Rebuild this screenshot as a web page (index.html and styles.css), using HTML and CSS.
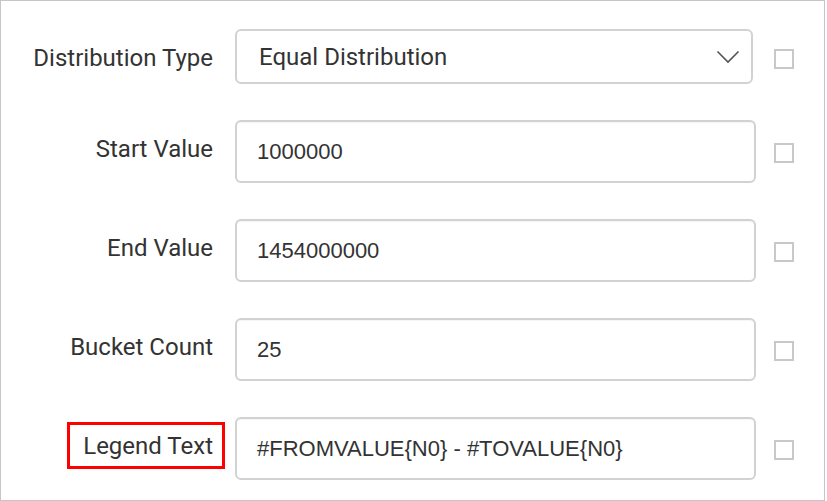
FILE: index.html
```html
<!DOCTYPE html>
<html>
<head>
<meta charset="utf-8">
<link rel="stylesheet" href="styles.css">
</head>
<body>
<div class="panel">
  <div class="row">
    <div class="label-col"><span class="label">Distribution Type</span></div>
    <div class="field">
      <div class="select">
        <span>Equal Distribution</span>
        <svg class="chev" width="24" height="14" viewBox="0 0 24 14"><path d="M1.5 1.5 L12 12 L22.5 1.5" fill="none" stroke="#555" stroke-width="1.6"/></svg>
      </div>
    </div>
    <div class="check check-select"></div>
  </div>
  <div class="row">
    <div class="label-col"><span class="label">Start Value</span></div>
    <div class="field"><div class="input">1000000</div></div>
    <div class="check"></div>
  </div>
  <div class="row">
    <div class="label-col"><span class="label">End Value</span></div>
    <div class="field"><div class="input">1454000000</div></div>
    <div class="check"></div>
  </div>
  <div class="row">
    <div class="label-col"><span class="label">Bucket Count</span></div>
    <div class="field"><div class="input">25</div></div>
    <div class="check"></div>
  </div>
  <div class="row">
    <div class="label-col"><span class="label label-hl">Legend Text</span></div>
    <div class="field"><div class="input">#FROMVALUE{N0} - #TOVALUE{N0}</div></div>
    <div class="check"></div>
  </div>
</div>
</body>
</html>
```
FILE: styles.css
```css
html, body {
  margin: 0;
  padding: 0;
  background: #fff;
}
.panel {
  box-sizing: border-box;
  width: 825px;
  height: 501px;
  border: 1px solid #c6c6c6;
  padding-top: 28px;
  display: flex;
  flex-direction: column;
  gap: 36px;
}
.row {
  display: flex;
  align-items: flex-start;
}
.label-col {
  width: 224px;
  display: flex;
  justify-content: flex-end;
  flex: none;
}
.label {
  margin-top: 5px;
  font-family: Roboto, "Liberation Sans", sans-serif;
  font-size: 24px;
  line-height: 39px;
  padding: 2px 9px 0 13px;
  color: #333;
  border: 3px solid transparent;
  white-space: nowrap;
}
.label-hl {
  border-color: #f00;
}
.field {
  margin-left: 10px;
  width: 521px;
  flex: none;
}
.select {
  box-sizing: border-box;
  width: 518px;
  height: 55px;
  border: 2px solid #d2d2d2;
  border-radius: 6px;
  display: flex;
  align-items: center;
  justify-content: space-between;
  padding: 1px 11px 0 22px;
  font-family: Roboto, "Liberation Sans", sans-serif;
  font-size: 24px;
  color: #333;
}
.chev {
  display: block;
}
.input {
  box-sizing: border-box;
  width: 521px;
  height: 63px;
  border: 2px solid #d2d2d2;
  border-radius: 6px;
  display: flex;
  align-items: center;
  padding: 1px 0 0 20px;
  font-family: "Liberation Sans", Arial, sans-serif;
  font-size: 22px;
  color: #333;
  box-shadow: inset 0 1px 1px rgba(0,0,0,0.04);
}
.check {
  box-sizing: border-box;
  width: 20px;
  height: 20px;
  border: 2px solid #c8c8c8;
  margin-left: 18px;
  margin-top: 23px;
  flex: none;
}
.check-select {
  margin-top: 20px;
}
```
